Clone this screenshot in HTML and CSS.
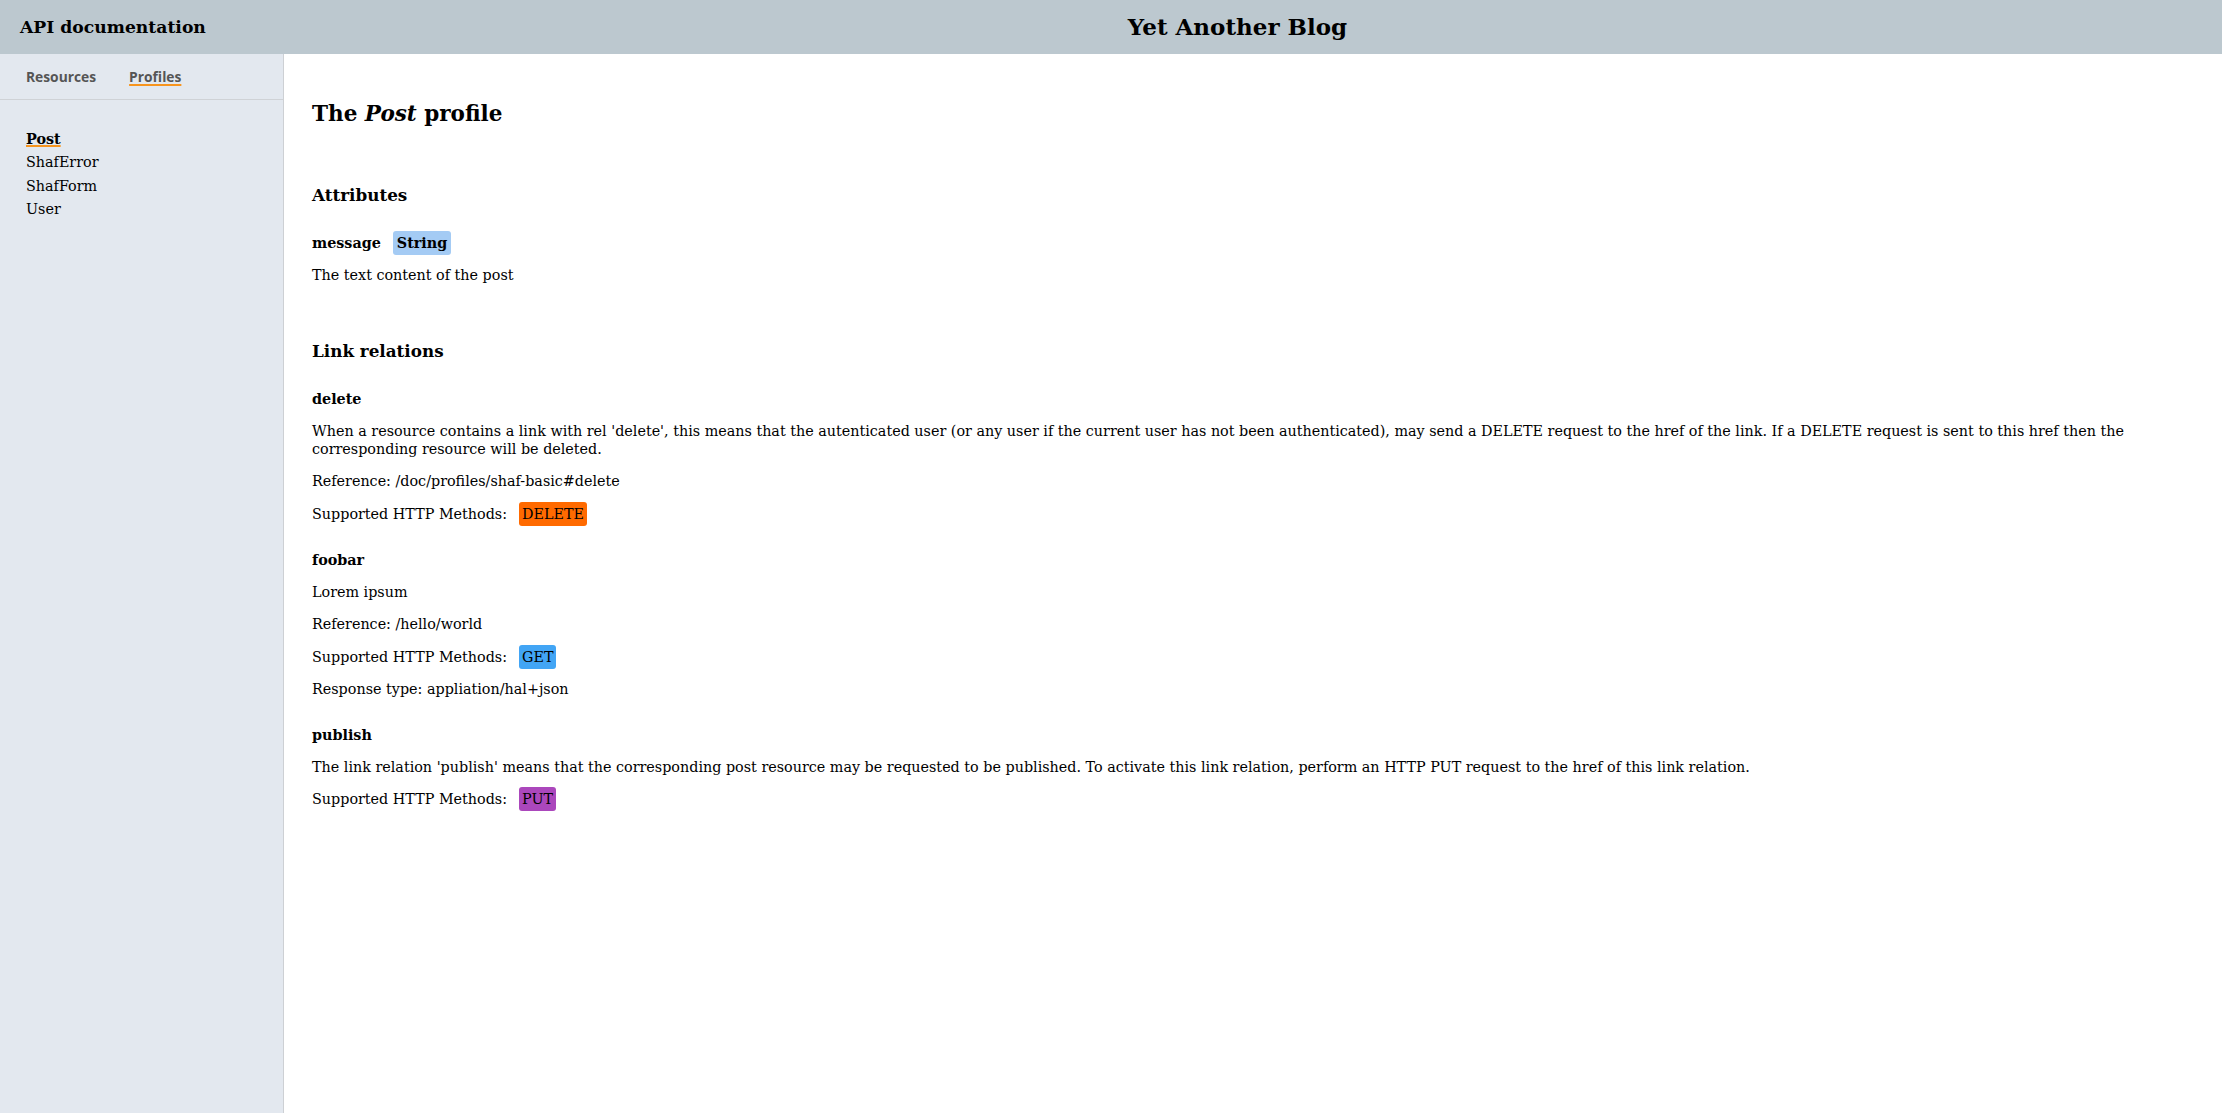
FILE: index.html
```html
<!DOCTYPE html>
<html lang="en">
<head>
<meta charset="utf-8">
<title>Yet Another Blog - API documentation</title>
<link rel="stylesheet" href="styles.css">
</head>
<body>
<header class="topbar">
  <div class="brand">API documentation</div>
  <div class="site-title">Yet Another Blog</div>
</header>
<div class="layout">
  <aside class="sidebar">
    <nav class="tabs">
      <a class="tab">Resources</a>
      <a class="tab active">Profiles</a>
    </nav>
    <ul class="nav-list">
      <li><a class="nav-item active">Post</a></li>
      <li><a class="nav-item">ShafError</a></li>
      <li><a class="nav-item">ShafForm</a></li>
      <li><a class="nav-item">User</a></li>
    </ul>
  </aside>
  <main class="content">
    <h1 class="page-title">The <em>Post</em> profile</h1>

    <h3 class="section-title">Attributes</h3>
    <h4 class="item-title">message<span class="badge badge-type">String</span></h4>
    <p class="text">The text content of the post</p>

    <h3 class="section-title">Link relations</h3>

    <h4 class="item-title">delete</h4>
    <p class="text">When a resource contains a link with rel 'delete', this means that the autenticated user (or any user if the current user has not been authenticated), may send a DELETE request to the href of the link. If a DELETE request is sent to this href then the corresponding resource will be deleted.</p>
    <p class="text">Reference: /doc/profiles/shaf-basic#delete</p>
    <p class="text">Supported HTTP Methods:<span class="badge badge-delete">DELETE</span></p>

    <h4 class="item-title">foobar</h4>
    <p class="text">Lorem ipsum</p>
    <p class="text">Reference: /hello/world</p>
    <p class="text">Supported HTTP Methods:<span class="badge badge-get">GET</span></p>
    <p class="text">Response type: appliation/hal+json</p>

    <h4 class="item-title">publish</h4>
    <p class="text">The link relation 'publish' means that the corresponding post resource may be requested to be published. To activate this link relation, perform an HTTP PUT request to the href of this link relation.</p>
    <p class="text">Supported HTTP Methods:<span class="badge badge-put">PUT</span></p>
  </main>
</div>
</body>
</html>
```
FILE: styles.css
```css
html, body {
  margin: 0;
  padding: 0;
}

body {
  font-family: "DejaVu Serif", serif;
  font-size: 14.33px;
  line-height: 18px;
  color: #000;
  background: #fff;
}

.topbar {
  display: flex;
  align-items: center;
  height: 54px;
  background: #bcc8cf;
}

.brand {
  width: 263px;
  padding-left: 20px;
  font-weight: bold;
  font-size: 17.2px;
  white-space: nowrap;
}

.site-title {
  flex: 1;
  padding-right: 30px;
  text-align: center;
  font-weight: bold;
  font-size: 23px;
}

.layout {
  display: flex;
  min-height: calc(100vh - 54px);
}

.sidebar {
  width: 283px;
  flex: none;
  background: #e3e8ef;
  border-right: 1px solid #cdd0d4;
}

.tabs {
  display: flex;
  align-items: center;
  gap: 33px;
  height: 46px;
  padding-left: 26px;
  border-bottom: 1px solid #cfd2d6;
  box-sizing: border-box;
}

.tab {
  font-family: "Open Sans", "DejaVu Sans", sans-serif;
  font-weight: bold;
  font-size: 13.8px;
  color: #555;
  text-decoration: none;
}

.tab.active {
  text-decoration: underline;
  text-decoration-color: #f7941d;
  text-decoration-thickness: 2px;
  text-underline-offset: 2px;
}

.nav-list {
  list-style: none;
  margin: 0;
  padding: 27.5px 0 0 26px;
}

.nav-list li {
  line-height: 23.5px;
}

.nav-item {
  color: #000;
  text-decoration: none;
}

.nav-item.active {
  font-weight: bold;
  text-decoration: underline;
  text-decoration-color: #f7941d;
  text-decoration-thickness: 2px;
  text-underline-offset: 1px;
}

.content {
  flex: 1;
  padding: 0 28px 40px 28px;
  min-width: 0;
}

.page-title {
  font-size: 21.5px;
  line-height: 28px;
  margin: 45.5px 0 0 0;
}

.section-title {
  font-size: 16.8px;
  line-height: 22px;
  margin: 56px 0 14px 0;
}

.item-title {
  font-size: 14.33px;
  line-height: 18px;
  margin: 28.5px 0 13.8px 0;
}

.text {
  margin: 0 0 14.3px 0;
}

.badge {
  display: inline;
  margin-left: 12px;
  padding: 4px 3px;
  border-radius: 3px;
}

.badge-type {
  padding: 4px 4px;
  background: #a4cbf4;
  font-weight: bold;
}

.badge-delete {
  background: #ff6a00;
}

.badge-get {
  background: #42a5f5;
}

.badge-put {
  background: #ab47bc;
}
```
